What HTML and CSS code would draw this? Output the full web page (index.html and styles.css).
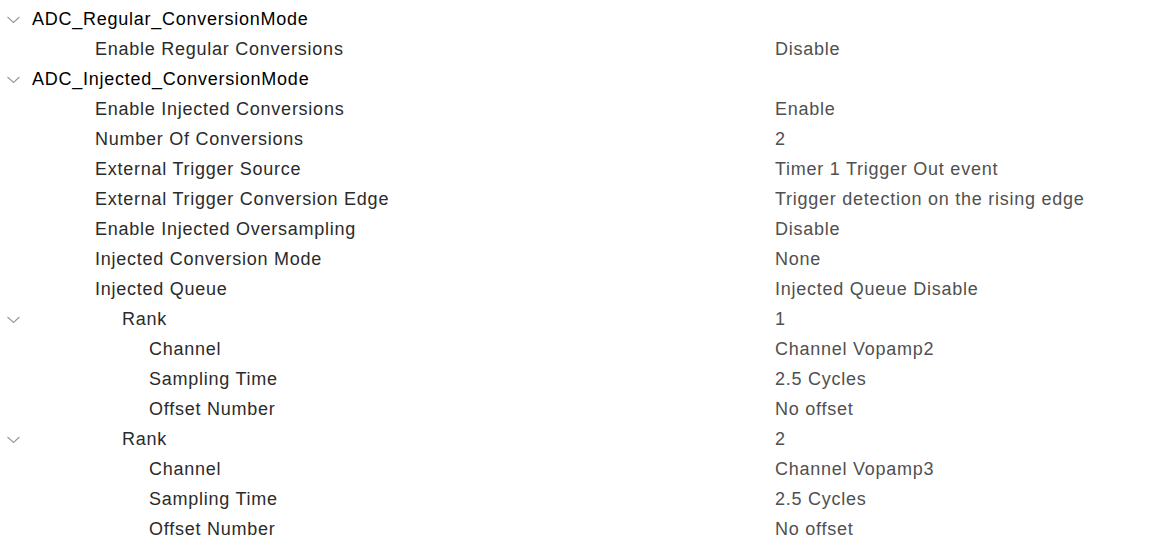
FILE: index.html
```html
<!DOCTYPE html>
<html>
<head>
<meta charset="utf-8">
<link rel="stylesheet" href="styles.css">
</head>
<body>
<div class="tree">
  <div class="row group"><span class="chev"><svg width="13" height="8" viewBox="0 0 13 8"><path d="M0.5 1 L6.5 6.5 L12.5 1" fill="none" stroke="#999999" stroke-width="1.1"/></svg></span><span class="name">ADC_Regular_ConversionMode</span></div>
  <div class="row"><span class="label l1">Enable Regular Conversions</span><span class="value">Disable</span></div>
  <div class="row group"><span class="chev"><svg width="13" height="8" viewBox="0 0 13 8"><path d="M0.5 1 L6.5 6.5 L12.5 1" fill="none" stroke="#999999" stroke-width="1.1"/></svg></span><span class="name">ADC_Injected_ConversionMode</span></div>
  <div class="row"><span class="label l1">Enable Injected Conversions</span><span class="value">Enable</span></div>
  <div class="row"><span class="label l1">Number Of Conversions</span><span class="value">2</span></div>
  <div class="row"><span class="label l1">External Trigger Source</span><span class="value">Timer 1 Trigger Out event</span></div>
  <div class="row"><span class="label l1">External Trigger Conversion Edge</span><span class="value">Trigger detection on the rising edge</span></div>
  <div class="row"><span class="label l1">Enable Injected Oversampling</span><span class="value">Disable</span></div>
  <div class="row"><span class="label l1">Injected Conversion Mode</span><span class="value">None</span></div>
  <div class="row"><span class="label l1">Injected Queue</span><span class="value">Injected Queue Disable</span></div>
  <div class="row"><span class="chev"><svg width="13" height="8" viewBox="0 0 13 8"><path d="M0.5 1 L6.5 6.5 L12.5 1" fill="none" stroke="#999999" stroke-width="1.1"/></svg></span><span class="label rank">Rank</span><span class="value">1</span></div>
  <div class="row"><span class="label l2">Channel</span><span class="value">Channel Vopamp2</span></div>
  <div class="row"><span class="label l2">Sampling Time</span><span class="value">2.5 Cycles</span></div>
  <div class="row"><span class="label l2">Offset Number</span><span class="value">No offset</span></div>
  <div class="row"><span class="chev"><svg width="13" height="8" viewBox="0 0 13 8"><path d="M0.5 1 L6.5 6.5 L12.5 1" fill="none" stroke="#999999" stroke-width="1.1"/></svg></span><span class="label rank">Rank</span><span class="value">2</span></div>
  <div class="row"><span class="label l2">Channel</span><span class="value">Channel Vopamp3</span></div>
  <div class="row"><span class="label l2">Sampling Time</span><span class="value">2.5 Cycles</span></div>
  <div class="row"><span class="label l2">Offset Number</span><span class="value">No offset</span></div>
</div>
</body>
</html>
```
FILE: styles.css
```css
html, body {
  margin: 0;
  padding: 0;
  background: #ffffff;
}
body {
  font-family: "Liberation Sans", Arial, sans-serif;
  font-size: 18px;
  letter-spacing: 0.75px;
}
.tree {
  padding-top: 4px;
  display: flex;
  flex-direction: column;
}
.row {
  height: 30px;
  display: flex;
  align-items: center;
  padding-left: 7px;
  white-space: nowrap;
}
.chev {
  width: 13px;
  height: 8px;
  display: flex;
  margin-right: 12px;
  margin-top: 1px;
}
.chev svg { display: block; }
.name {
  color: #000000;
}
.label {
  color: #2b2b2b;
}
.l1 { margin-left: 88px; width: 680px; flex: none; }
.rank { margin-left: 90px; width: 653px; flex: none; }
.l2 { margin-left: 142px; width: 626px; flex: none; }
.value {
  color: #505050;
}
```
